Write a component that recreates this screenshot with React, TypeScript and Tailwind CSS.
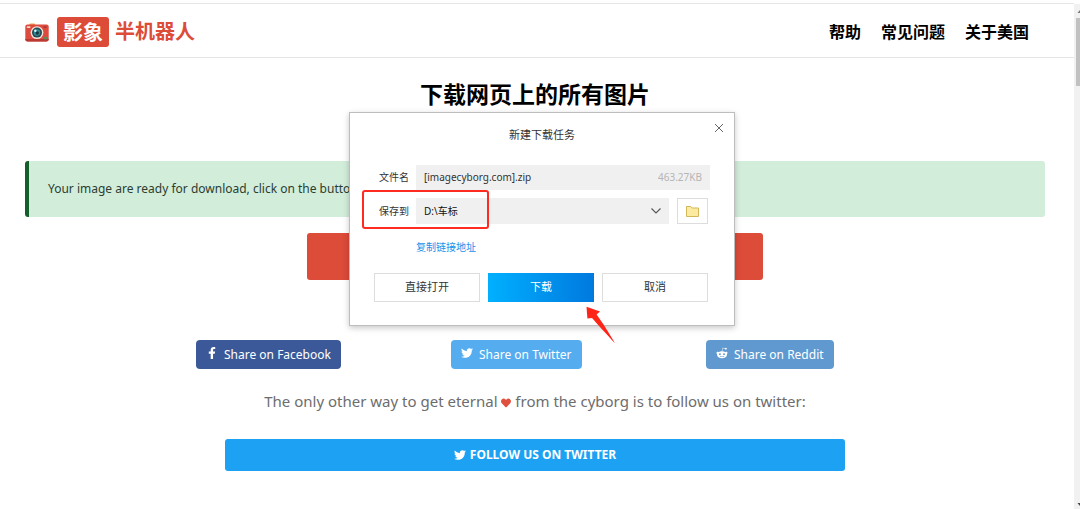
import React from 'react';
import { FaFacebookF, FaTwitter, FaRedditAlien, FaHeart } from 'react-icons/fa';

const NAV_LINKS = ['帮助', '常见问题', '关于美国'];

const SHARE_LINKS = [
  { label: 'Share on Facebook', icon: FaFacebookF, color: 'bg-[#3b5998]' },
  { label: 'Share on Twitter', icon: FaTwitter, color: 'bg-[#55acee]' },
  { label: 'Share on Reddit', icon: FaRedditAlien, color: 'bg-[#5f99cf]' },
];

const CameraLogo: React.FC = () => (
  <svg viewBox="0 0 24 20" className="w-6 h-5" aria-hidden="true">
    <path d="M4 3.2 5 1.4h4.6l.9 1.8z" fill="#f0a14a" />
    <rect x="0.3" y="2.4" width="23.4" height="17" rx="2.2" fill="#dd4b3e" />
    <path d="M.3 17h23.4v.3a2.1 2.1 0 0 1-2.1 2.1H2.4A2.1 2.1 0 0 1 .3 17.3z" fill="#b93a35" />
    <rect x="1.8" y="4.3" width="3.6" height="1.8" rx=".5" fill="#f7d9c9" />
    <rect x="18.5" y="4.3" width="3" height="1.6" rx=".5" fill="#a83432" />
    <circle cx="12" cy="10.6" r="6.4" fill="#f3e3d8" />
    <circle cx="12" cy="10.6" r="5" fill="#274954" />
    <circle cx="12" cy="10.6" r="3.3" fill="#2e8c95" />
    <circle cx="12.3" cy="11" r="1.7" fill="#16353f" />
    <circle cx="10.3" cy="8.8" r="1.2" fill="#d9f4f2" />
    <circle cx="20.5" cy="16" r="1.5" fill="#3f9a62" />
  </svg>
);

const Header: React.FC = () => (
  <header className="flex items-center justify-between h-[55px] pt-[3px] pl-[25px] pr-[45px] border-t border-b border-[#e6e6e6]">
    <a href="#" className="flex items-center text-xl font-bold text-[#dd4b39]">
      <CameraLogo />
      <span className="ml-2 px-[6px] h-[30px] leading-8 rounded-[3px] bg-[#dd4b39] text-white">影象</span>
      <span className="ml-[6px]">半机器人</span>
    </a>
    <nav className="flex gap-5 text-base font-bold text-black">
      {NAV_LINKS.map((label) => (
        <a key={label} href="#">{label}</a>
      ))}
    </nav>
  </header>
);

const DownloadDialog: React.FC = () => (
  <div
    role="dialog"
    aria-labelledby="dialog-title"
    className="absolute top-[112px] left-1/2 -translate-x-[191px] w-[386px] h-[214px] px-6 bg-white border border-[#bdbdbd] shadow-[0_2px_6px_rgba(0,0,0,0.22)] text-[#333]"
  >
    <h2 id="dialog-title" className="pt-[14px] text-center text-[11px] leading-4">新建下载任务</h2>
    <button type="button" aria-label="Close" className="absolute top-[10px] right-[10px]">
      <svg viewBox="0 0 10 10" className="w-[10px] h-[10px]" stroke="#666" strokeWidth="1" fill="none">
        <path d="M1 1l8 8M9 1l-8 8" />
      </svg>
    </button>

    <div className="flex items-center mt-[22px] h-[25px] text-[10px]">
      <label htmlFor="file-name" className="w-[42px] pl-[5px]">文件名</label>
      <div className="flex flex-1 items-center h-full px-2 bg-[#f0f0f0]">
        <input id="file-name" readOnly value="[imagecyborg.com].zip" className="flex-1 min-w-0 outline-none" />
        <span className="text-[#b5b5b5]">463.27KB</span>
      </div>
    </div>

    <div className="flex items-center mt-2 h-[26px] text-[10px]">
      <label htmlFor="save-to" className="w-[42px] pl-[5px]">保存到</label>
      <div className="relative flex-1 h-full">
        <select id="save-to" className="appearance-none w-full h-full px-2 bg-[#f0f0f0] text-[#111] outline-none">
          <option>D:\车标</option>
        </select>
        <svg viewBox="0 0 10 6" className="absolute top-[10px] right-2 w-[10px] h-[6px] pointer-events-none" stroke="#555" strokeWidth="1.1" fill="none">
          <path d="M.5.5 5 5 9.5.5" />
        </svg>
      </div>
      <button type="button" aria-label="Browse" className="flex items-center justify-center w-[31px] h-full ml-2 mr-[2px] border border-[#ddd]">
        <svg viewBox="0 0 13 11" className="w-[13px] h-[11px]" fill="#fbeaa0" stroke="#d3b75b" strokeWidth="1">
          <path d="M.5.5h4.3l1.2 1.5h6.5v8.5H.5z" />
        </svg>
      </button>
    </div>

    <a href="#" className="block w-fit mt-4 ml-[42px] text-[10px] leading-[14px] text-[#1890ea]">复制链接地址</a>

    <div className="grid grid-cols-3 gap-2 mt-[19px] mr-[2px] text-[11px]">
      <button type="button" className="h-[29px] border border-[#ddd]">直接打开</button>
      <button type="button" className="h-[29px] bg-linear-to-r from-[#00b0ff] to-[#0079de] text-white">下载</button>
      <button type="button" className="h-[29px] border border-[#ddd]">取消</button>
    </div>

    {/* highlight and pointer drawn over the dialog */}
    <div className="absolute top-[77px] left-3 w-[127px] h-[39px] border-2 border-[#ff2a20] rounded-[3px] pointer-events-none" />
    <svg viewBox="0 0 30 38" className="absolute top-[193px] left-[236px] w-[30px] h-[38px] pointer-events-none" fill="#ff2418">
      <path d="M.5.7 14 5.6 10.6 8.6C16 16 23 27 29 37.3 20 28 11 17.5 6 12.1L1.4 12.6z" />
    </svg>
  </div>
);

const ScrollBar: React.FC = () => (
  <div className="flex flex-col items-end justify-between w-[6px] mt-1 bg-[#f1f1f1]" aria-hidden="true">
    <div className="w-1">
      <svg viewBox="0 0 4 14" className="w-1 h-[14px]" fill="#777">
        <path d="M4 6v3H1.5z" />
      </svg>
      <div className="h-[68px] bg-[#c1c1c1]" />
    </div>
    <svg viewBox="0 0 4 10" className="w-1 h-[10px]" fill="#444">
      <path d="M1.5 4H4v3z" />
    </svg>
  </div>
);

export default function App() {
  return (
    <div className="relative flex min-h-screen overflow-hidden bg-white font-['Noto_Sans','Noto_Sans_CJK_SC',sans-serif]">
      <div className="flex-1 pt-[3px]">
        <Header />

        <main className="pl-[25px] pr-[29px]">
          <h1 className="mt-5 text-center text-[23px] leading-8 font-bold text-black">下载网页上的所有图片</h1>

          <div className="flex items-center mt-[51px] h-14 pl-[19px] rounded-[3px] border-l-4 border-[#155f2c] bg-[#d3eddb] text-xs text-[#2b3d30]">
            Your image are ready for download, click on the button
          </div>

          <button type="button" aria-label="Download" className="block w-[456px] h-[47px] mx-auto mt-4 rounded-[3px] bg-[#dd4b39]" />

          <div className="grid grid-cols-3 w-3/4 mt-[60px] ml-[171px]">
            {SHARE_LINKS.map(({ label, icon: Icon, color }) => (
              <a key={label} href="#" className={`flex items-center gap-[6px] w-fit h-[29px] px-[10px] rounded text-xs text-white ${color}`}>
                <Icon className="w-3 h-3 mb-1" />
                {label}
              </a>
            ))}
          </div>

          <p className="mt-5 text-center text-[15px] leading-6 text-[#6d6d6d]">
            The only other way to get eternal{' '}
            <FaHeart className="inline w-[10px] h-[10px] text-[#e0503f]" />{' '}
            from the cyborg is to follow us on twitter:
          </p>

          <a href="#" className="flex items-center justify-center gap-1 max-w-[620px] h-8 mx-auto mt-[26px] rounded-[3px] bg-[#1da1f2] text-xs font-bold text-white">
            <FaTwitter className="w-3 h-3" />
            FOLLOW US ON TWITTER
          </a>
        </main>
      </div>

      <ScrollBar />
      <DownloadDialog />
    </div>
  );
}
